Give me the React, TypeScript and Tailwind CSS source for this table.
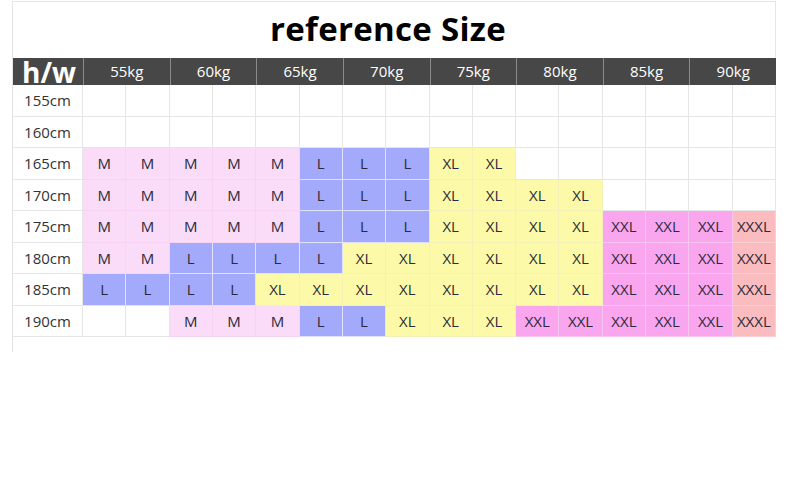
const WEIGHTS = ['55kg', '60kg', '65kg', '70kg', '75kg', '80kg', '85kg', '90kg']

type Size = '' | 'M' | 'L' | 'XL' | 'XXL' | 'XXXL'

const rep = (s: Size, n: number): Size[] => Array.from({ length: n }, () => s)

const ROWS: { h: string; cells: Size[] }[] = [
  { h: '155cm', cells: rep('', 16) },
  { h: '160cm', cells: rep('', 16) },
  { h: '165cm', cells: [...rep('M', 5), ...rep('L', 3), ...rep('XL', 2), ...rep('', 6)] },
  { h: '170cm', cells: [...rep('M', 5), ...rep('L', 3), ...rep('XL', 4), ...rep('', 4)] },
  { h: '175cm', cells: [...rep('M', 5), ...rep('L', 3), ...rep('XL', 4), ...rep('XXL', 3), 'XXXL'] },
  { h: '180cm', cells: [...rep('M', 2), ...rep('L', 4), ...rep('XL', 6), ...rep('XXL', 3), 'XXXL'] },
  { h: '185cm', cells: [...rep('L', 4), ...rep('XL', 8), ...rep('XXL', 3), 'XXXL'] },
  { h: '190cm', cells: [...rep('', 2), ...rep('M', 3), ...rep('L', 2), ...rep('XL', 3), ...rep('XXL', 5), 'XXXL'] },
]

const CELL: Record<Size, string> = {
  '': 'bg-white border-[#e6e6e6]',
  M: 'bg-[#fadcf8] border-[#f6d2f3]',
  L: 'bg-[#a3a9fb] border-[#dfe1fd]',
  XL: 'bg-[#fcfaa8] border-[#f3f1b8]',
  XXL: 'bg-[#f9a6ef] border-[#f6c4f0]',
  XXXL: 'bg-[#fbbcbf] border-[#f9cfd1]',
}

export default function App() {
  return (
    <div className="w-[790px] h-[481px] bg-white font-['Open_Sans',sans-serif] text-[#222]">
      <div className="ml-[12px] mt-[1px] w-[764px] border-l border-[#e3e3e3]">
        {/* Title */}
        <div className="h-[57px] border-t border-r border-[#e6e6e6] flex items-center justify-center pr-[12px]">
          <h1 className="text-[33px] font-bold text-black tracking-[0.3px] leading-none -mt-[3px]">
            reference Size
          </h1>
        </div>

        {/* Weight header */}
        <div className="h-[27px] bg-[#474747] grid grid-cols-[70px_repeat(8,minmax(0,1fr))] text-white">
          <div className="flex items-end justify-center text-[28px] font-bold leading-none -mb-[1px] pl-[2px]">h/w</div>
          {WEIGHTS.map((w) => (
            <div
              key={w}
              className="flex items-center justify-center text-[15px] border-l border-[#8a8a8a]"
            >
              {w}
            </div>
          ))}
        </div>

        {/* Body */}
        <div className="grid grid-cols-[70px_repeat(16,minmax(0,1fr))] auto-rows-[31.5px]">
          {ROWS.map((r) => (
            <Row key={r.h} h={r.h} cells={r.cells} />
          ))}
        </div>
        <div className="h-[15px] w-[1px]" />
      </div>
    </div>
  )
}

function Row({ h, cells }: { h: string; cells: Size[] }) {
  return (
    <>
      <div className="flex items-center justify-center text-[15px] text-[#333] border-r border-b border-[#e6e6e6]">
        {h}
      </div>
      {cells.map((s, i) => (
        <div
          key={i}
          className={`flex items-center justify-center text-[15px] text-[#2a2a3a] border-r border-b ${CELL[s]}`}
        >
          {s}
        </div>
      ))}
    </>
  )
}
